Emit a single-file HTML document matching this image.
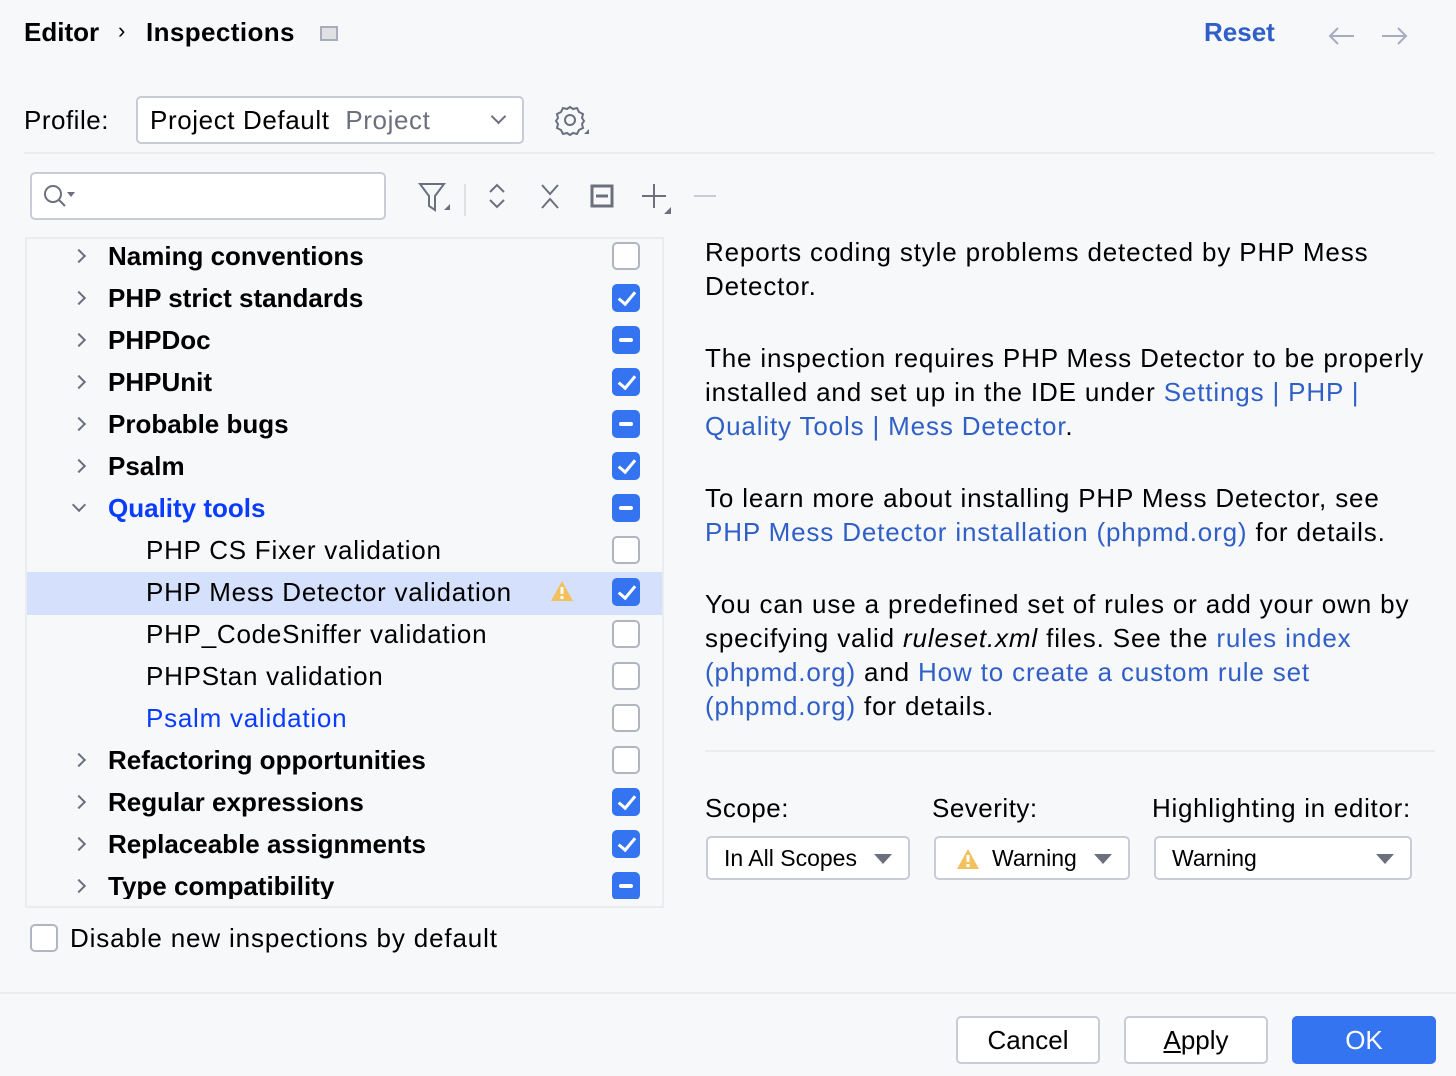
<!DOCTYPE html>
<html><head><meta charset="utf-8"><style>
*{margin:0;padding:0;box-sizing:border-box}
body{width:1456px;height:1076px;background:#f7f8fa;font-family:"Liberation Sans",sans-serif;color:#000;position:relative;overflow:hidden;font-size:26px}
.a{position:absolute;white-space:nowrap}
.b{font-weight:bold}
.r{letter-spacing:0.75px}
.lk{color:#2f5fc7}
.cb{position:absolute;left:612px;width:28px;height:28px;border-radius:5px;background:#fff;border:2px solid #b0b5c0}
.cb.on{background:#3574f0;border-color:#3574f0}
.cb.on::after{content:"";position:absolute;left:8px;top:2px;width:7px;height:14px;border:solid #fff;border-width:0 3px 3px 0;transform:rotate(40deg)}
.cb.mid{background:#3574f0;border-color:#3574f0}
.cb.mid::after{content:"";position:absolute;left:5px;top:10px;width:14px;height:4px;border-radius:2px;background:#fff}
.chev{position:absolute;left:74px;width:10px;height:10px;border:solid #6c707e;border-width:2px 2px 0 0;transform:rotate(45deg)}
.btn{position:absolute;top:1016px;height:48px;width:144px;border:2px solid #c9ccd6;border-radius:5px;background:#fff;text-align:center;line-height:44px}
.dd{position:absolute;top:836px;height:44px;border:2px solid #c9ccd6;border-radius:5px;background:#fff;font-size:23px;line-height:40px}
.tri{position:absolute;width:0;height:0;border-left:9px solid transparent;border-right:9px solid transparent;border-top:10px solid #6c707e;top:16px}
.p{position:absolute;left:705px;white-space:nowrap;letter-spacing:0.85px}
</style></head><body>
<div class="a b" style="left:24px;top:17px;font-size:26px">Editor</div>
<div class="a" style="left:118px;top:18px;font-size:22px">›</div>
<div class="a b" style="left:146px;top:17px;letter-spacing:0.4px">Inspections</div>
<div class="a" style="left:320px;top:26px;width:18px;height:15px;border:2px solid #a8adbd;background:#dfe1e5"></div>
<div class="a b" style="left:1204px;top:17px;color:#2f5fc7">Reset</div>
<svg class="a" style="left:1326px;top:24px" width="84" height="24"><path d="M28 12H4M12 4l-8 8 8 8M56 12h24M72 4l8 8-8 8" fill="none" stroke="#a8adbd" stroke-width="2"/></svg>

<div class="a" style="left:24px;top:105px;letter-spacing:0.5px">Profile:</div>
<div class="a" style="left:136px;top:96px;width:388px;height:48px;border:2px solid #c9ccd6;border-radius:5px;background:#fff"></div>
<div class="a" style="left:150px;top:105px;letter-spacing:0.6px">Project Default <span style="color:#6c707e;margin-left:8px">Project</span></div>
<div class="a" style="left:493px;top:111px;width:11px;height:11px;border:solid #6c707e;border-width:0 2px 2px 0;transform:rotate(45deg)"></div>
<svg class="a" style="left:554px;top:104px" width="36" height="34" viewBox="0 0 36 34"><circle cx="16" cy="16" r="5" fill="none" stroke="#6c707e" stroke-width="2"/><path d="M16 3l3 2 4-1 2 4 4 2-1 4 2 3-2 3 1 4-4 2-2 4-4-1-3 2-3-2-4 1-2-4-4-2 1-4-2-3 2-3-1-4 4-2 2-4 4 1z" fill="none" stroke="#6c707e" stroke-width="2"/><path d="M30 30h5v-5z" fill="#6c707e"/></svg>
<div class="a" style="left:24px;top:152px;width:1410px;height:2px;background:#ebecf0"></div>

<div class="a" style="left:30px;top:172px;width:356px;height:48px;border:2px solid #c9ccd6;border-radius:5px;background:#fff"></div>
<svg class="a" style="left:42px;top:184px" width="36" height="26"><circle cx="11" cy="10" r="8" fill="none" stroke="#6c707e" stroke-width="2"/><path d="M17 16l6 6" stroke="#6c707e" stroke-width="2"/><path d="M25 8h8l-4 5z" fill="#6c707e"/></svg>
<svg class="a" style="left:416px;top:180px" width="300" height="36"><path d="M4 4h24l-9 12v14l-6-4V16z" fill="none" stroke="#6c707e" stroke-width="2"/><path d="M28 30h6v-6z" fill="#6c707e"/><path d="M49 4v36" stroke="#dfe1e5" stroke-width="2"/><path d="M74 12l7-7 7 7M74 20l7 7 7-7" fill="none" stroke="#6c707e" stroke-width="2"/><path d="M126 5l8 9 8-9M126 28l8-9 8 9" fill="none" stroke="#6c707e" stroke-width="2"/><rect x="176" y="6" width="20" height="20" fill="none" stroke="#6c707e" stroke-width="3"/><path d="M180 16h12" stroke="#6c707e" stroke-width="3"/><path d="M238 4v24M226 16h24" stroke="#6c707e" stroke-width="2"/><path d="M248 34h7v-7z" fill="#6c707e"/><path d="M278 16h24" stroke="#c9ccd6" stroke-width="2"/></svg>

<div class="a" style="left:25px;top:237px;width:639px;height:671px;border:2px solid #ebecf0;overflow:hidden">
<div class="a" style="left:0;top:333px;width:640px;height:43px;background:#d5e1fc"></div>
</div>
<div class="chev" style="top:251px"></div><div class="a b" style="left:108px;top:241px">Naming conventions</div><div class="cb" style="top:242px"></div>
<div class="chev" style="top:293px"></div><div class="a b" style="left:108px;top:283px">PHP strict standards</div><div class="cb on" style="top:284px"></div>
<div class="chev" style="top:335px"></div><div class="a b" style="left:108px;top:325px">PHPDoc</div><div class="cb mid" style="top:326px"></div>
<div class="chev" style="top:377px"></div><div class="a b" style="left:108px;top:367px">PHPUnit</div><div class="cb on" style="top:368px"></div>
<div class="chev" style="top:419px"></div><div class="a b" style="left:108px;top:409px">Probable bugs</div><div class="cb mid" style="top:410px"></div>
<div class="chev" style="top:461px"></div><div class="a b" style="left:108px;top:451px">Psalm</div><div class="cb on" style="top:452px"></div>
<div class="chev" style="top:500px;transform:rotate(135deg)"></div><div class="a b" style="left:108px;top:493px;color:#0a3cff">Quality tools</div><div class="cb mid" style="top:494px"></div>
<div class="a r" style="left:146px;top:535px">PHP CS Fixer validation</div><div class="cb" style="top:536px"></div>
<div class="a r" style="left:146px;top:577px">PHP Mess Detector validation</div><div class="cb on" style="top:578px"></div>
<svg class="a" style="left:550px;top:580px" width="24" height="22"><path d="M12 1L23 21H1z" fill="#f2c05c"/><rect x="10.5" y="7" width="3" height="7" fill="#fff"/><rect x="10.5" y="16" width="3" height="3" fill="#fff"/></svg>
<div class="a r" style="left:146px;top:619px">PHP_CodeSniffer validation</div><div class="cb" style="top:620px"></div>
<div class="a r" style="left:146px;top:661px">PHPStan validation</div><div class="cb" style="top:662px"></div>
<div class="a r" style="left:146px;top:703px;color:#0a3cff">Psalm validation</div><div class="cb" style="top:704px"></div>
<div class="chev" style="top:755px"></div><div class="a b" style="left:108px;top:745px">Refactoring opportunities</div><div class="cb" style="top:746px"></div>
<div class="chev" style="top:797px"></div><div class="a b" style="left:108px;top:787px">Regular expressions</div><div class="cb on" style="top:788px"></div>
<div class="chev" style="top:839px"></div><div class="a b" style="left:108px;top:829px">Replaceable assignments</div><div class="cb on" style="top:830px"></div>
<div style="position:absolute;left:27px;top:868px;width:636px;height:31px;overflow:hidden">
<div class="chev" style="top:13px;left:47px"></div><div class="a b" style="left:81px;top:3px">Type compatibility</div><div class="cb mid" style="top:4px;left:585px"></div></div>

<div class="a" style="left:30px;top:924px;width:28px;height:28px;border:2px solid #b0b5c0;border-radius:5px;background:#fff"></div>
<div class="a" style="left:70px;top:923px;letter-spacing:0.85px">Disable new inspections by default</div>

<div class="p" style="top:237px">Reports coding style problems detected by PHP Mess</div>
<div class="p" style="top:271px">Detector.</div>
<div class="p" style="top:343px">The inspection requires PHP Mess Detector to be properly</div>
<div class="p" style="top:377px">installed and set up in the IDE under <span class="lk">Settings | PHP |</span></div>
<div class="p" style="top:411px"><span class="lk">Quality Tools | Mess Detector</span>.</div>
<div class="p" style="top:483px">To learn more about installing PHP Mess Detector, see</div>
<div class="p" style="top:517px"><span class="lk">PHP Mess Detector installation (phpmd.org)</span> for details.</div>
<div class="p" style="top:589px">You can use a predefined set of rules or add your own by</div>
<div class="p" style="top:623px">specifying valid <i>ruleset.xml</i> files. See the <span class="lk">rules index</span></div>
<div class="p" style="top:657px"><span class="lk">(phpmd.org)</span> and <span class="lk">How to create a custom rule set</span></div>
<div class="p" style="top:691px"><span class="lk">(phpmd.org)</span> for details.</div>
<div class="a" style="left:705px;top:750px;width:730px;height:2px;background:#ebecf0"></div>

<div class="a" style="left:705px;top:793px;letter-spacing:0.5px">Scope:</div>
<div class="a" style="left:932px;top:793px;letter-spacing:0.5px">Severity:</div>
<div class="a" style="left:1152px;top:793px;letter-spacing:0.7px">Highlighting in editor:</div>
<div class="dd" style="left:706px;width:204px"><span style="margin-left:16px">In All Scopes</span><div class="tri" style="left:166px"></div></div>
<div class="dd" style="left:934px;width:196px"><svg style="position:absolute;left:20px;top:10px" width="24" height="22"><path d="M12 1L23 21H1z" fill="#f2c05c"/><rect x="10.5" y="7" width="3" height="7" fill="#fff"/><rect x="10.5" y="16" width="3" height="3" fill="#fff"/></svg><span style="margin-left:56px">Warning</span><div class="tri" style="left:158px"></div></div>
<div class="dd" style="left:1154px;width:258px"><span style="margin-left:16px">Warning</span><div class="tri" style="left:220px"></div></div>

<div class="a" style="left:0;top:992px;width:1456px;height:2px;background:#ebecf0"></div>
<div class="btn" style="left:956px">Cancel</div>
<div class="btn" style="left:1124px"><u>A</u>pply</div>
<div class="btn" style="left:1292px;background:#3574f0;border-color:#3574f0;color:#fff">OK</div>
</body></html>
